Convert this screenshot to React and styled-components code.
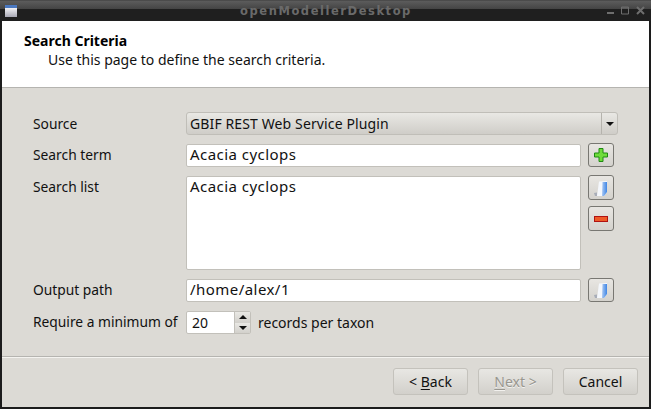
import styled, { createGlobalStyle } from "styled-components";

const Global = createGlobalStyle`
  html, body { margin: 0; padding: 0; }
  body { background: #1c1c1c; font-family: "Noto Sans", "Open Sans", sans-serif; font-size: 14px; color: #111; }
`;

const Window = styled.div`
  width: 651px;
  height: 409px;
  box-sizing: border-box;
  display: flex;
  flex-direction: column;
  background: #1c1c1c;
  overflow: hidden;
`;

const TitleBar = styled.div`
  height: 21px;
  flex: none;
  box-sizing: border-box;
  display: flex;
  align-items: center;
  padding: 0 6px 0 5px;
  background: linear-gradient(#3a3a3a 0, #5c5c5c 1px, #444 9px, #1f1f1f 9.5px, #1f1f1f 100%);
`;

const AppIcon = styled.div`
  width: 12px;
  height: 12px;
  border-top: 3px solid #4a78c0;
  box-sizing: border-box;
  background: linear-gradient(#f2f2f5, #a8a8b4);
`;

const TitleText = styled.div`
  flex: 1;
  text-align: center;
  font-family: "DejaVu Sans", sans-serif;
  font-weight: 700;
  font-size: 11.5px;
  letter-spacing: 1.55px;
  color: #6a6a6a;
  padding-left: 29px;
`;

const WinButtons = styled.div`
  display: flex;
  align-items: center;
  gap: 6px;
  color: #6e6e6e;
`;

const Content = styled.div`
  flex: 1;
  margin: 0 2px 2px;
  display: flex;
  flex-direction: column;
  background: #dcdad5;
  min-height: 0;
`;

const Header = styled.div`
  height: 67px;
  flex: none;
  box-sizing: border-box;
  background: #fff;
  border-bottom: 1px solid #b5b4b0;
  padding: 10px 0 0 22px;
  line-height: 19px;
`;

const HeaderTitle = styled.div`
  font-weight: 700;
  color: #000;
`;

const HeaderSub = styled.div`
  padding-left: 24px;
  color: #111;
`;

const Form = styled.div`
  flex: 1;
  box-sizing: border-box;
  padding: 24px 0 0 31px;
  display: grid;
  grid-template-columns: 153px 395px 33px;
  grid-template-rows: 23px 23px 94px 23px 23px;
  row-gap: 9px;
  border-bottom: 1px solid #b5b4b0;
  box-shadow: 0 1px 0 #f4f3f0;
`;

const Label = styled.div`
  font-size: 13.8px;
  line-height: ${(p) => (p.$raised ? "21px" : "23px")};
  height: 23px;
`;

const Field = styled.div`
  box-sizing: border-box;
  background: #fff;
  border: 1px solid #c2c0ba;
  border-radius: 2px;
  padding: 0 3px;
  font-size: 15px;
  letter-spacing: 0.45px;
  line-height: 19px;
  color: #111;
`;

const Combo = styled.div`
  grid-column: 2 / 4;
  width: 432px;
  box-sizing: border-box;
  display: flex;
  height: 23px;
  line-height: 22px;
  border: 1px solid #c0beb8;
  border-radius: 3px;
  background: linear-gradient(#e9e8e4, #cfcdc8);
  padding-left: 3px;
`;

const ComboText = styled.div`
  flex: 1;
  letter-spacing: 0.12px;
`;

const ComboArrow = styled.div`
  width: 15px;
  border-left: 1px solid #b5b3ad;
  display: flex;
  align-items: center;
  justify-content: center;
  &::after {
    content: "";
    border-left: 4px solid transparent;
    border-right: 4px solid transparent;
    border-top: 4px solid #111;
  }
`;

const Side = styled.div`
  display: flex;
  flex-direction: column;
  gap: 6px;
  padding-left: 7px;
  margin-top: -1px;
`;

const ToolButton = styled.div`
  width: 26px;
  height: 25px;
  box-sizing: border-box;
  border: 1px solid #787772;
  border-radius: 3px;
  background: linear-gradient(#e8e6e2, #d4d2cd);
  display: flex;
  align-items: center;
  justify-content: center;
`;

const SpinRow = styled.div`
  grid-column: 2 / 4;
  display: flex;
  align-items: center;
  gap: 7px;
  line-height: 21px;
`;

const Spin = styled.div`
  width: 65px;
  height: 23px;
  box-sizing: border-box;
  display: flex;
  background: #fff;
  border: 1px solid #c2c0ba;
  border-radius: 2px;
`;

const SpinValue = styled.div`
  flex: 1;
  padding-left: 5px;
  line-height: 22px;
`;

const SpinArrows = styled.div`
  width: 15px;
  display: flex;
  flex-direction: column;
  border-left: 1px solid #c2c0ba;
`;

const SpinArrow = styled.div`
  flex: 1;
  background: linear-gradient(#e9e8e4, #d2d0cb);
  display: flex;
  align-items: center;
  justify-content: center;
  &::after {
    content: "";
    border-left: 4px solid transparent;
    border-right: 4px solid transparent;
    ${(p) => (p.$up ? "border-bottom: 4px solid #111;" : "border-top: 4px solid #111;")}
  }
`;

const Footer = styled.div`
  height: 50px;
  flex: none;
  box-sizing: border-box;
  display: flex;
  justify-content: flex-end;
  gap: 10px;
  padding: 11px 11px 0 0;
`;

const PushButton = styled.div`
  width: 75px;
  height: 27px;
  box-sizing: border-box;
  border: 1px solid #c4c2bc;
  border-radius: 3px;
  background: linear-gradient(#e8e7e3, #d2d0cb);
  text-align: center;
  line-height: 26px;
  color: ${(p) => (p.$disabled ? "#98968f" : "#111")};
  text-shadow: ${(p) => (p.$disabled ? "0 1px 0 #f2f1ee" : "none")};
  u { text-underline-offset: 2px; }
`;

const PlusIcon = () => (
  <svg width="14" height="14" viewBox="0 0 14 14">
    <path d="M5 .5h4v4.500h4.500v4H9v4.500H5V9H.5V5H5z" fill="#6fdc3a" stroke="#1f8a12" />
  </svg>
);

const MinusIcon = () => (
  <svg width="14" height="6" viewBox="0 0 14 6">
    <rect x=".5" y=".5" width="13" height="5" fill="#ee5a28" stroke="#b01212" />
  </svg>
);

const FileIcon = ({ id }) => (
  <svg width="16" height="18" viewBox="0 0 16 18">
    <defs>
      <linearGradient id={id} x1="0" y1="0" x2="1" y2="0">
        <stop offset="0" stopColor="#a9c8f2" />
        <stop offset="1" stopColor="#3f86e6" />
      </linearGradient>
    </defs>
    <path d="M1 14l3-.5 0 3.500-2 0z" fill="#a8adb8" />
    <path d="M6 2.500L14 2v11l-3 4H4z" fill="#f4f7fc" />
    <path d="M9.500 3h4.500v10l-3 4H9z" fill={`url(#${id})`} />
  </svg>
);

const App = () => {
  return (
    <Window>
      <Global />
      <TitleBar>
        <AppIcon />
        <TitleText>openModellerDesktop</TitleText>
        <WinButtons>
          <svg width="9" height="9" viewBox="0 0 9 9"><rect x="1" y="6" width="7" height="2" fill="currentColor" /></svg>
          <svg width="9" height="9" viewBox="0 0 9 9"><path d="M.5 1h7v7h-7z M.5 2h7" fill="none" stroke="currentColor" /></svg>
          <svg width="9" height="9" viewBox="0 0 9 9"><path d="M1 1l7 7M8 1l-7 7" stroke="currentColor" strokeWidth="2" /></svg>
        </WinButtons>
      </TitleBar>
      <Content>
        <Header>
          <HeaderTitle>Search Criteria</HeaderTitle>
          <HeaderSub>Use this page to define the search criteria.</HeaderSub>
        </Header>
        <Form>
          <Label>Source</Label>
          <Combo>
            <ComboText>GBIF REST Web Service Plugin</ComboText>
            <ComboArrow />
          </Combo>

          <Label $raised>Search term</Label>
          <Field>Acacia cyclops</Field>
          <Side><ToolButton><PlusIcon /></ToolButton></Side>

          <Label $raised>Search list</Label>
          <Field>Acacia cyclops</Field>
          <Side>
            <ToolButton><FileIcon id="fileA" /></ToolButton>
            <ToolButton><MinusIcon /></ToolButton>
          </Side>

          <Label $raised>Output path</Label>
          <Field>/home/alex/1</Field>
          <Side><ToolButton><FileIcon id="fileB" /></ToolButton></Side>

          <Label $raised>Require a minimum of</Label>
          <SpinRow>
            <Spin>
              <SpinValue>20</SpinValue>
              <SpinArrows>
                <SpinArrow $up />
                <SpinArrow />
              </SpinArrows>
            </Spin>
            <span>records per taxon</span>
          </SpinRow>
        </Form>
        <Footer>
          <PushButton>&lt; <u>B</u>ack</PushButton>
          <PushButton $disabled><u>N</u>ext &gt;</PushButton>
          <PushButton>Cancel</PushButton>
        </Footer>
      </Content>
    </Window>
  );
};

export default App;
